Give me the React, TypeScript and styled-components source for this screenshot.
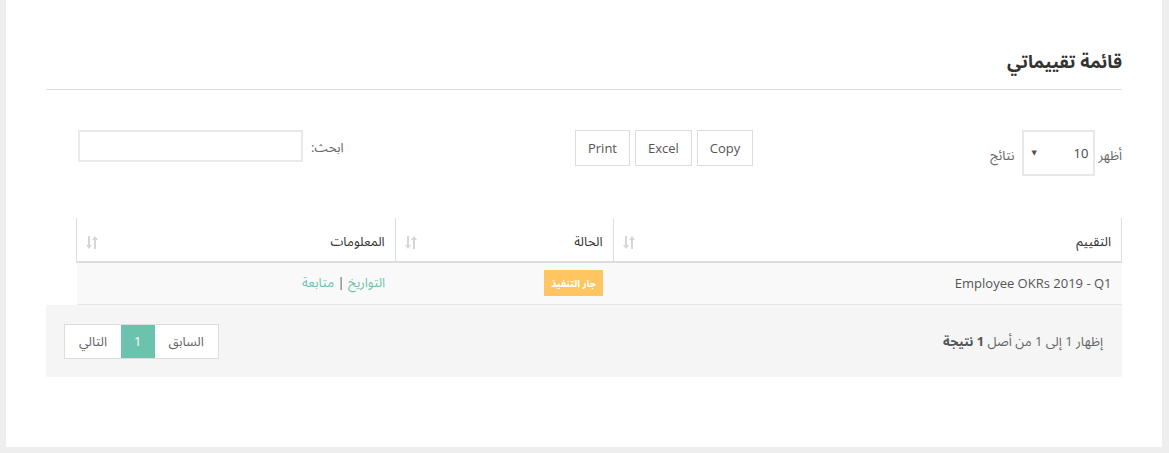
import React from "react";
import styled, { createGlobalStyle } from "styled-components";

const Global = createGlobalStyle`
  html, body { margin: 0; padding: 0; background: #eeeeee; }
  body { font-family: "Open Sans", "Noto Sans Arabic", "Noto Kufi Arabic", "DejaVu Sans", sans-serif; color: #555; }
  * { box-sizing: border-box; }
`;

const Page = styled.div`
  padding: 0 7px 6px 6px;
`;

const Card = styled.div`
  background: #fff;
  height: 447px;
  padding: 43px 40px 0 40px;
  direction: rtl;
`;

const Title = styled.h2`
  margin: 0;
  font-size: 18px;
  font-weight: 700;
  color: #333;
  line-height: 36px;
  padding-bottom: 10px;
  border-bottom: 1px solid #dddddd;
`;

const Controls = styled.div`
  display: grid;
  grid-template-columns: 1fr 1fr 1fr;
  margin-top: 40px;
  height: 88px;
`;

const LengthBox = styled.div`
  display: flex;
  align-items: flex-start;
  font-size: 13px;
  color: #666;
`;

const LenLabel = styled.span`
  line-height: 46px;
  padding-top: 2px;
  &:last-child { margin-right: 8px; }
`;

const SelectBox = styled.div`
  width: 73px;
  height: 46px;
  border: 2px solid #e8e8e8;
  margin-right: 3px;
  display: flex;
  align-items: center;
  justify-content: space-between;
  padding: 0 5px 0 7px;
  font-size: 13px;
  color: #444;
`;

const Caret = styled.span`
  font-size: 7px;
  color: #555;
  margin-top: -2px;
`;

const ButtonsBox = styled.div`
  display: flex;
  align-items: flex-start;
  padding-right: 10px;
  gap: 5px;
`;

const ExportButton = styled.button`
  height: 36px;
  padding: 0 12px;
  background: #fff;
  border: 1px solid #dddddd;
  font-family: "Open Sans", sans-serif;
  font-size: 13px;
  color: #555;
  cursor: pointer;
`;

const FilterBox = styled.div`
  display: flex;
  align-items: flex-start;
  justify-content: flex-end;
  padding-left: 32px;
  font-size: 13px;
  color: #666;
`;

const FilterLabel = styled.span`
  line-height: 32px;
  margin-left: 8px;
  margin-top: 1px;
`;

const SearchInput = styled.input`
  width: 225px;
  height: 32px;
  border: 2px solid #e9e9e9;
  outline: none;
  background: #fff;
`;

const Table = styled.table`
  width: 1046px;
  margin-left: 30px;
  border-collapse: collapse;
  font-size: 13px;
`;

const HeadCell = styled.th<{ $w: number }>`
  width: ${(p) => p.$w}px;
  height: 44px;
  text-align: right;
  font-weight: 400;
  color: #333;
  padding: 4px 10px 0 10px;
  border-left: 1px solid #dddddd;
  border-right: 1px solid #dddddd;
  border-bottom: 2px solid #dddddd;
  position: relative;
`;

const SortIcon = styled.svg`
  position: absolute;
  left: 9px;
  top: 18px;
`;

const BodyRow = styled.tr`
  background: #f9f9f9;
  border-bottom: 1px solid #e6e6e6;
`;

const Cell = styled.td`
  height: 42px;
  padding: 0 10px;
  text-align: right;
  color: #555;
  vertical-align: middle;
`;

const Badge = styled.span`
  display: inline-block;
  background: #ffc561;
  color: #fff;
  font-size: 10px;
  font-weight: 700;
  padding: 5px 7px;
  line-height: 16px;
`;

const LinkText = styled.a`
  color: #6cc3ad;
  text-decoration: none;
`;

const Footer = styled.div`
  background: #f5f5f5;
  height: 72px;
  display: flex;
  align-items: center;
  justify-content: space-between;
  padding: 0 19px 0 18px;
`;

const Info = styled.div`
  font-size: 13px;
  color: #666;
  margin-top: 2px;
  b { color: #555; }
`;

const Pager = styled.div`
  display: flex;
  border: 1px solid #dddddd;
  background: #fff;
  margin-top: 2px;
`;

const PageItem = styled.span<{ $active?: boolean }>`
  height: 33px;
  line-height: 33px;
  padding: 0 ${(p) => (p.$active ? 13 : 14)}px;
  font-size: 13px;
  color: ${(p) => (p.$active ? "#fff" : "#666")};
  background: ${(p) => (p.$active ? "#6cc3ad" : "#fff")};
`;

const Sort = () => (
  <SortIcon width="12" height="13" viewBox="0 0 12 13">
    <g fill="#d6d6d6">
      <rect x="2" y="0" width="2" height="10" />
      <polygon points="0,9 6,9 3,13" />
      <rect x="8" y="3" width="2" height="10" />
      <polygon points="6,4 12,4 9,0" />
    </g>
  </SortIcon>
);

export default function App() {
  return (
    <Page>
      <Global />
      <Card>
        <Title>قائمة تقييماتي</Title>
        <Controls>
          <LengthBox>
            <LenLabel>أظهر</LenLabel>
            <SelectBox>
              <span>10</span>
              <Caret>▼</Caret>
            </SelectBox>
            <LenLabel>نتائج</LenLabel>
          </LengthBox>
          <ButtonsBox>
            <ExportButton>Copy</ExportButton>
            <ExportButton>Excel</ExportButton>
            <ExportButton>Print</ExportButton>
          </ButtonsBox>
          <FilterBox>
            <FilterLabel>ابحث:</FilterLabel>
            <SearchInput />
          </FilterBox>
        </Controls>
        <Table>
          <thead>
            <tr>
              <HeadCell $w={509}>
                التقييم
                <Sort />
              </HeadCell>
              <HeadCell $w={218}>
                الحالة
                <Sort />
              </HeadCell>
              <HeadCell $w={319}>
                المعلومات
                <Sort />
              </HeadCell>
            </tr>
          </thead>
          <tbody>
            <BodyRow>
              <Cell>Employee OKRs 2019 - Q1</Cell>
              <Cell>
                <Badge>جار التنفيذ</Badge>
              </Cell>
              <Cell>
                <LinkText href="#">التواريخ</LinkText> | <LinkText href="#">متابعة</LinkText>
              </Cell>
            </BodyRow>
          </tbody>
        </Table>
        <Footer>
          <Info>
            إظهار 1 إلى 1 من أصل <b>1</b> <b>نتيجة</b>
          </Info>
          <Pager>
            <PageItem>السابق</PageItem>
            <PageItem $active>1</PageItem>
            <PageItem>التالي</PageItem>
          </Pager>
        </Footer>
      </Card>
    </Page>
  );
}
